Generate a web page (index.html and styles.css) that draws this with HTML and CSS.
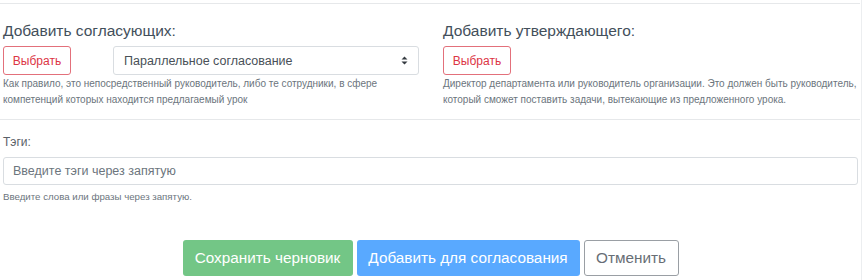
FILE: index.html
```html
<!DOCTYPE html>
<html lang="ru">
<head>
    <meta charset="UTF-8">
    <meta name="viewport" content="width=device-width, initial-scale=1.0">
    <title>Согласование урока</title>
    <link rel="stylesheet" href="styles.css">
</head>
<body>
    <div class="lesson-form">
        <hr class="divider">
        <div class="approvers">
            <div class="approver-col">
                <h5 class="approver-title">Добавить согласующих:</h5>
                <div class="approver-controls">
                    <button class="btn-pick">Выбрать</button>
                    <div class="select-box">
                        <span>Параллельное согласование</span>
                        <svg class="select-arrows" width="7" height="9" viewBox="0 0 7 9">
                            <path d="M3.5 0.5 L6.5 3.5 H0.5 Z M3.5 8.5 L6.5 5.5 H0.5 Z" fill="#343a40"/>
                        </svg>
                    </div>
                </div>
                <p class="hint">Как правило, это непосредственный руководитель, либо те сотрудники, в сфере компетенций которых находится предлагаемый урок</p>
            </div>
            <div class="approver-col">
                <h5 class="approver-title">Добавить утверждающего:</h5>
                <div class="approver-controls">
                    <button class="btn-pick">Выбрать</button>
                </div>
                <p class="hint">Директор департамента или руководитель организации. Это должен быть руководитель, который сможет поставить задачи, вытекающие из предложенного урока.</p>
            </div>
        </div>
        <hr class="divider divider-mid">
        <div class="tags-group">
            <label class="tags-label" for="tags">Тэги:</label>
            <input type="text" id="tags" class="tags-input" placeholder="Введите тэги через запятую">
            <p class="hint hint-tags">Введите слова или фразы через запятую.</p>
        </div>
        <div class="actions">
            <button class="action action-save" disabled>Сохранить черновик</button>
            <button class="action action-send" disabled>Добавить для согласования</button>
            <button class="action action-cancel">Отменить</button>
        </div>
    </div>
</body>
</html>
```

FILE: styles.css
```css
body {
    margin: 0;
    font-family: "Liberation Sans", Arial, sans-serif;
    background-color: #fff;
    color: #495057;
}

.lesson-form {
    width: 862px;
    height: 280px;
    border-right: 1px solid #eceef0;
    box-sizing: border-box;
    overflow: hidden;
}

.divider {
    margin: 3px 0 0;
    border: none;
    border-top: 1px solid #e6e8ea;
    width: 860px;
}

.divider-mid {
    margin-top: 11px;
}

.approvers {
    display: grid;
    grid-template-columns: 416px 416px;
    column-gap: 24px;
    padding: 0 3px;
}

.approver-title {
    margin: 17px 0 5px;
    font-size: 15.5px;
    font-weight: 400;
    line-height: 20px;
    color: #434f5b;
}

.approver-controls {
    display: flex;
    align-items: center;
    gap: 42px;
}

.btn-pick {
    height: 29px;
    width: 68px;
    padding: 0;
    background: #fff;
    border: 1px solid #e3707b;
    border-radius: 3px;
    color: #dc3545;
    font-family: inherit;
    font-size: 12px;
}

.select-box {
    flex: 1;
    height: 29px;
    box-sizing: border-box;
    border: 1px solid #d9dde1;
    border-radius: 3px;
    display: flex;
    align-items: center;
    justify-content: space-between;
    padding: 0 10px;
    font-size: 12.5px;
    color: #495057;
}

.hint {
    margin: 1px 0 0;
    font-size: 10px;
    line-height: 16px;
    color: #6c757d;
}

.tags-group {
    padding: 0 3px;
}

.tags-label {
    display: block;
    margin-top: 13px;
    font-size: 12px;
    line-height: 18px;
    color: #5a6168;
}

.tags-input {
    display: block;
    margin-top: 6px;
    width: 100%;
    height: 28px;
    box-sizing: border-box;
    border: 1px solid #d9dde1;
    border-radius: 3px;
    padding: 0 9px;
    font-family: inherit;
    font-size: 12.5px;
}

.tags-input::placeholder {
    color: #6c757d;
}

.hint-tags {
    margin-top: 5px;
    font-size: 9.7px;
    line-height: 14px;
}

.actions {
    display: flex;
    justify-content: center;
    gap: 4px;
    margin-top: 36px;
}

.action {
    height: 36px;
    padding: 0;
    border-radius: 3px;
    border: 1px solid transparent;
    font-family: inherit;
    font-size: 15.3px;
    color: #fff;
    white-space: nowrap;
}

.action-save {
    background: #73c686;
    width: 170px;
}

.action-send {
    background: #59a9ff;
    width: 223px;
}

.action-cancel {
    background: #fff;
    border-color: #9a9fa4;
    color: #676e75;
    width: 95px;
    cursor: pointer;
}
```
